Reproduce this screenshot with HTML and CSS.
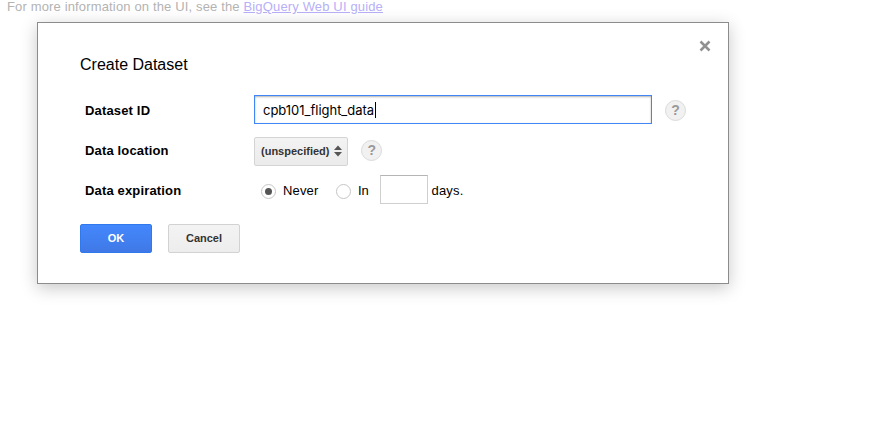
FILE: index.html
```html
<!DOCTYPE html>
<html lang="en">
<head>
<meta charset="utf-8">
<title>Create Dataset</title>
<link rel="stylesheet" href="styles.css">
</head>
<body>
<p class="intro">For more information on the UI, see the <a href="#">BigQuery Web UI guide</a></p>
<div class="dialog" role="dialog">
  <header class="head">
    <h1 class="title">Create Dataset</h1>
    <svg class="close" viewBox="0 0 12 12"><path d="M1.500 1.500l9 9M10.500 1.500l-9 9" stroke="#919191" stroke-width="2.500"/></svg>
  </header>
  <div class="row">
    <span class="label">Dataset ID</span>
    <div class="field"><span class="value">cpb101_flight_data</span><span class="caret"></span></div>
    <span class="help">?</span>
  </div>
  <div class="row">
    <span class="label">Data location</span>
    <div class="select"><span>(unspecified)</span><svg class="arrows" viewBox="0 0 8 12"><path d="M4 0.500L8 5H0zM4 11.500L0 7H8z" fill="#555"/></svg></div>
    <span class="help near">?</span>
  </div>
  <div class="row">
    <span class="label">Data expiration</span>
    <div class="options">
      <span class="radio on"></span><span class="never">Never</span>
      <span class="radio"></span><span class="in">In</span>
      <span class="days-box"></span><span class="days">days.</span>
    </div>
  </div>
  <div class="buttons">
    <span class="btn primary">OK</span>
    <span class="btn">Cancel</span>
  </div>
</div>
</body>
</html>
```
FILE: styles.css
```css
* { box-sizing: border-box; }
body {
  margin: 0;
  height: 433px;
  overflow: hidden;
  background: #fff;
  color: #000;
  font-family: "Liberation Sans", Arial, sans-serif;
  font-size: 13px;
}
.intro {
  margin: 0 0 0 7px;
  font-size: 13px;
  line-height: 14px;
  letter-spacing: 0.15px;
  color: #b3b3b3;
  white-space: nowrap;
}
.intro a { color: #b8b0f8; }
.dialog {
  position: absolute;
  left: 37px;
  top: 22px;
  width: 692px;
  height: 262px;
  padding: 0 42px;
  background: #fff;
  border: 1px solid #8c8c8c;
  box-shadow: 0 4px 16px rgba(0, 0, 0, 0.22);
}
.head {
  display: flex;
  height: 67px;
  padding-top: 17px;
  justify-content: space-between;
}
.title {
  margin: 15px 0 0;
  font-size: 16px;
  font-weight: 400;
  line-height: 20px;
}
.close { width: 12px; height: 12px; margin-right: -25px; }
.row {
  display: flex;
  align-items: center;
  height: 40px;
  padding-left: 5px;
}
.label {
  width: 169px;
  font-size: 13px;
  font-weight: 700;
  letter-spacing: 0.16px;
}
.field {
  display: flex;
  align-items: center;
  width: 398px;
  height: 29px;
  margin-top: -1px;
  padding: 1px 0 0 8px;
  border: 1px solid #4285f4;
  box-shadow: inset 0 1px 2px rgba(0, 0, 0, 0.3);
  font: 13px Inter, Roboto, sans-serif;
}
.value { width: 112px; letter-spacing: -0.02px; white-space: nowrap; }
.caret { width: 1px; height: 16px; background: #000; }
.help {
  width: 21px;
  height: 21px;
  margin-left: 13px;
  border: 1px solid #dadada;
  border-radius: 50%;
  background: #f1f1f1;
  color: #999;
  font-size: 14px;
  font-weight: 700;
  line-height: 19px;
  text-align: center;
}
.near { margin-left: 13.4px; }
.select {
  display: flex;
  align-items: center;
  justify-content: space-between;
  width: 94px;
  height: 29px;
  margin-top: 2px;
  padding: 0 5px 0 6px;
  border: 1px solid #d4d4d4;
  border-radius: 2px;
  background: linear-gradient(#f3f3f3, #ebebeb);
  color: #333;
  font-size: 11px;
  font-weight: 700;
}
.arrows { width: 8px; height: 12px; }
.options { display: flex; align-items: center; padding-left: 7px; }
.radio {
  display: grid;
  place-items: center;
  width: 15px;
  height: 15px;
  margin-top: 2px;
  border: 1px solid #c6c6c6;
  border-radius: 50%;
}
.on::after {
  content: "";
  width: 7px;
  height: 7px;
  border-radius: 50%;
  background: #555;
}
.never { width: 60px; padding-left: 7px; letter-spacing: 0.15px; }
.in { width: 29px; padding-left: 7px; }
.days-box {
  width: 48px;
  height: 29px;
  margin-top: -1px;
  border: 1px solid #cfcfcf;
  border-top-color: #b5b5b5;
}
.days { padding-left: 3.5px; letter-spacing: 0.2px; }
.buttons { display: flex; gap: 16px; margin-top: 14px; }
.btn {
  width: 72px;
  height: 29px;
  border: 1px solid #d2d2d2;
  border-radius: 2px;
  background: linear-gradient(#f3f3f3, #ededed);
  color: #333;
  font-size: 11px;
  font-weight: 700;
  line-height: 27px;
  text-align: center;
}
.primary {
  border-color: #3079ed;
  background: linear-gradient(#4387fd, #4079e6);
  color: #fff;
}
```
